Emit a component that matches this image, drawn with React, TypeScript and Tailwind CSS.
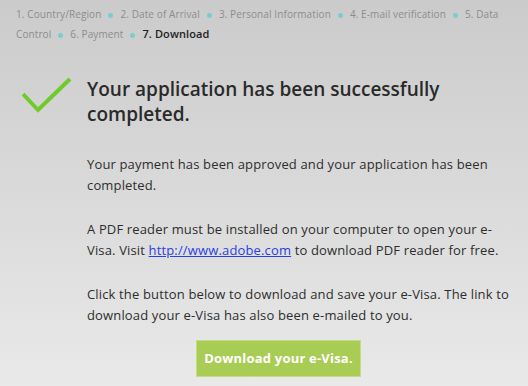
const steps = [
  "1. Country/Region",
  "2. Date of Arrival",
  "3. Personal Information",
  "4. E-mail verification",
  "5. Data",
];

function Dot() {
  return <span className="mx-[7px] inline-block h-[5px] w-[5px] rounded-full bg-[#7ccbd0] align-middle" />;
}

export default function App() {
  return (
    <div
      className="h-[386px] w-[528px] overflow-hidden bg-gradient-to-b from-[#cbcbcb] to-[#e9e9e9] text-[#333]"
      style={{ fontFamily: '"Open Sans", "DejaVu Sans", sans-serif' }}
    >
      <nav className="px-[16px] pt-[4px] text-[10px] leading-[20px] tracking-[0.1px] text-[#8c8c8c]">
        {steps.map((s, i) => (
          <span key={s}>
            {s}
            {i < steps.length - 1 && <Dot />}
          </span>
        ))}
        <br />
        <span>Control</span>
        <Dot />
        <span>6. Payment</span>
        <Dot />
        <span className="text-[11px] font-semibold text-[#222]">7. Download</span>
      </nav>

      <div className="mt-[33px] flex gap-[15px] pl-[22px] pr-[12px]">
        <svg width="50" height="36" viewBox="0 0 50 36" className="shrink-0">
          <path d="M1 17 L16 33 L48 2" fill="none" stroke="#6ecb2a" strokeWidth="4" />
        </svg>
        <div className="flex-1">
          <h1 className="text-[19px] font-semibold leading-[25px] text-[#2a2a2a]">
            Your application has been successfully completed.
          </h1>
          <div className="mt-[27px] space-y-[23px] text-[13px] leading-[21px] tracking-[0.15px] text-[#2e2e2e]">
            <p>Your payment has been approved and your application has been completed.</p>
            <p>
              A PDF reader must be installed on your computer to open your e-Visa. Visit{" "}
              <a href="#" className="text-[#2a3fe0] underline">
                http://www.adobe.com
              </a>{" "}
              to download PDF reader for free.
            </p>
            <p>
              Click the button below to download and save your e-Visa. The link to download your e-Visa has
              also been e-mailed to you.
            </p>
          </div>
          <div className="mt-[14px] pl-[109px]">
            <button className="h-[37px] w-[165px] border border-[#c3dc86] bg-[#a9cc55] text-[13px] font-bold tracking-[0.2px] text-white">
              Download your e-Visa.
            </button>
          </div>
        </div>
      </div>
    </div>
  );
}
